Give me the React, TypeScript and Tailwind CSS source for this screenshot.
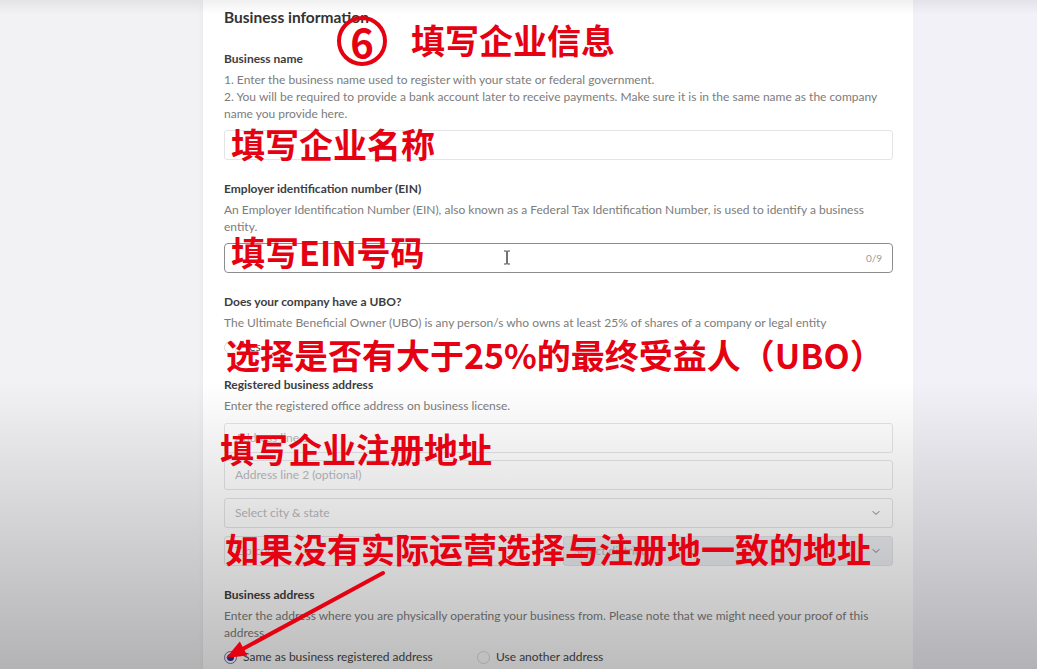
import { ChevronDown } from "lucide-react";
import type { ReactNode } from "react";

function Label({ children }: { children: ReactNode }) {
  return <div className="text-[12px] leading-[17px] font-bold text-[#3d3d3d]">{children}</div>;
}

function Help({ children }: { children: ReactNode }) {
  return <p className="mt-1 text-[12px] leading-[17px] text-[#7c7c7c]">{children}</p>;
}

function Field({ placeholder, select, muted }: { placeholder: string; select?: boolean; muted?: boolean }) {
  return (
    <div
      className={`flex h-[30px] items-center justify-between rounded-[3px] border border-[#e4e4e6] px-[10px] ${
        muted ? "bg-[#eceef2]" : "bg-white"
      }`}
    >
      <span className="text-[12px] text-[#b9b9bc]">{placeholder}</span>
      {select && <ChevronDown className="h-3 w-3 text-[#777]" strokeWidth={2} />}
    </div>
  );
}

function Radio({ checked, label }: { checked?: boolean; label: string }) {
  return (
    <div className="flex items-center gap-[6px]">
      <span
        className={`flex h-[13px] w-[13px] items-center justify-center rounded-full border ${
          checked ? "border-[#6f72a8]" : "border-[#dcdcdf]"
        } bg-white`}
      >
        {checked && <span className="h-[7px] w-[7px] rounded-full bg-[#2e2c8c]" />}
      </span>
      <span className="text-[12px] text-[#474747]">{label}</span>
    </div>
  );
}

function Note({ children, className }: { children: ReactNode; className: string }) {
  return (
    <div
      className={`absolute whitespace-nowrap text-[34px] font-bold leading-none text-[#e50012] font-['Noto_Sans_CJK_SC',sans-serif] ${className}`}
    >
      {children}
    </div>
  );
}

export default function App() {
  return (
    <div className="relative flex h-[669px] w-[1037px] overflow-hidden font-['Lato','Open_Sans',sans-serif]">
      <div className="w-[203px] bg-[#f2f2f4]" />

      <main className="w-[710px] bg-white pl-[21px] pr-[20px] pt-[7px] shadow-[0_0_6px_rgba(0,0,0,0.06)]">
        <h2 className="text-[15.5px] leading-[20px] font-bold text-[#333]">Business information</h2>

        <section className="mt-[23px]">
          <Label>Business name</Label>
          <Help>
            1. Enter the business name used to register with your state or federal government.
            <br />
            2. You will be required to provide a bank account later to receive payments. Make sure it is in the same name as the company
            <br />
            name you provide here.
          </Help>
          <div className="mt-2">
            <Field placeholder="" />
          </div>
        </section>

        <section className="mt-5">
          <Label>Employer identification number (EIN)</Label>
          <Help>
            An Employer Identification Number (EIN), also known as a Federal Tax Identification Number, is used to identify a business
            <br />
            entity.
          </Help>
          <div className="relative mt-2 flex h-[30px] items-center justify-end rounded-[4px] border-[1.5px] border-[#8d8d90] bg-white px-[10px]">
            <span className="text-[10px] text-[#9a9a9a]">0/9</span>
            <svg className="absolute left-[278px] top-[6px]" width="8" height="15" viewBox="0 0 8 15">
              <path d="M1 1h2.2c.5 0 .8.3.8.8v11.4c0 .5-.3.8-.8.8H1M7 1H4.8c-.5 0-.8.3-.8.8v11.4c0 .5.3.8.8.8H7" fill="none" stroke="#444" strokeWidth="1" />
            </svg>
          </div>
        </section>

        <section className="mt-5">
          <Label>Does your company have a UBO?</Label>
          <Help>The Ultimate Beneficial Owner (UBO) is any person/s who owns at least 25% of shares of a company or legal entity</Help>
          <div className="mt-2 flex h-4 items-center">
            <Radio label="Yes" />
          </div>
        </section>

        <section className="mt-[21px]">
          <Label>Registered business address</Label>
          <Help>Enter the registered office address on business license.</Help>
          <div className="mt-[9px] flex flex-col">
            <Field placeholder="Address line 1" />
            <div className="mt-[7px]">
              <Field placeholder="Address line 2 (optional)" />
            </div>
            <div className="mt-2">
              <Field placeholder="Select city & state" select />
            </div>
            <div className="mt-2 grid grid-cols-2 gap-2">
              <Field placeholder="Zip code" />
              <Field placeholder="Select district" select muted />
            </div>
          </div>
        </section>

        <section className="mt-5">
          <Label>Business address</Label>
          <Help>
            Enter the address where you are physically operating your business from. Please note that we might need your proof of this
            <br />
            address.
          </Help>
          <div className="mt-2 flex h-4 items-center">
            <div className="w-[253px]">
              <Radio checked label="Same as business registered address" />
            </div>
            <Radio label="Use another address" />
          </div>
        </section>
      </main>

      <div className="flex-1 bg-[#f1f1f7]" />

      {/* video frame shading */}
      <div className="pointer-events-none absolute inset-x-0 top-0 h-[14px] bg-linear-to-b from-black/[0.06] to-transparent" />
      <div className="pointer-events-none absolute inset-0 bg-linear-to-b from-transparent from-[57%] to-black/[0.26]" />

      {/* red annotations */}
      <div className="absolute left-[337px] top-[16px] flex h-[50px] w-[50px] items-center justify-center rounded-full border-[4px] border-[#e50012] font-['Noto_Sans_CJK_SC',sans-serif] text-[40px] font-bold leading-none text-[#e50012]">
        6
      </div>
      <Note className="left-[411px] top-[23px]">填写企业信息</Note>
      <Note className="left-[231px] top-[127px]">填写企业名称</Note>
      <Note className="left-[231px] top-[235px]">填写EIN号码</Note>
      <Note className="left-[226px] top-[338px]">选择是否有大于25%的最终受益人（UBO）</Note>
      <Note className="left-[220px] top-[432px]">填写企业注册地址</Note>
      <Note className="left-[225px] top-[532px]">如果没有实际运营选择与注册地一致的地址</Note>

      <svg className="absolute left-[215px] top-[565px]" width="180" height="105" viewBox="0 0 180 105">
        <line x1="168" y1="8" x2="28.6" y2="83.5" stroke="#e50012" strokeWidth="4" strokeLinecap="round" />
        <polygon points="11,93 32.4,90.5 24.8,76.5" fill="#e50012" />
      </svg>
    </div>
  );
}
